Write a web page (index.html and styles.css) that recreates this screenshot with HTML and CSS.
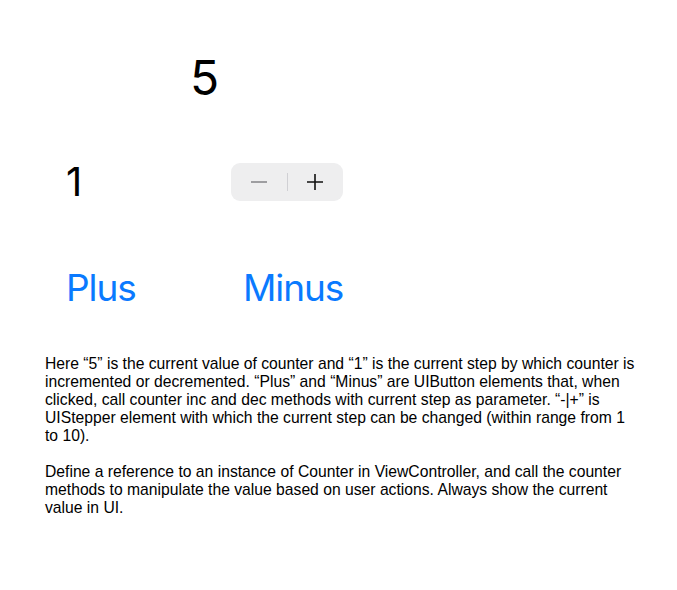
FILE: index.html
```html
<!DOCTYPE html>
<html>
<head>
<meta charset="utf-8">
<link rel="stylesheet" href="styles.css">
</head>
<body>
<div class="screen">
  <div class="value-row"><span class="value">5</span></div>
  <div class="step-row">
    <span class="step">1</span>
    <div class="stepper">
      <span class="stepper-btn"><svg width="18" height="18" viewBox="0 0 18 18"><path d="M1 9H17" stroke="#8a8a8e" stroke-width="1.6"/></svg></span>
      <span class="stepper-sep"></span>
      <span class="stepper-btn"><svg width="18" height="18" viewBox="0 0 18 18"><path d="M1 9H17M9 1V17" stroke="#111" stroke-width="1.6"/></svg></span>
    </div>
  </div>
  <div class="button-row">
    <span class="btn btn-plus">Plus</span>
    <span class="btn btn-minus">Minus</span>
  </div>
  <div class="desc">
    <p>Here “5” is the current value of counter and “1” is the current step by which counter is incremented or decremented. “Plus” and “Minus” are UIButton elements that, when clicked, call counter inc and dec methods with current step as parameter. “-|+” is UIStepper element with which the current step can be changed (within range from 1 to 10).</p>
    <p>Define a reference to an instance of Counter in ViewController, and call the counter methods to manipulate the value based on user actions. Always show the current value in UI.</p>
  </div>
</div>
</body>
</html>
```
FILE: styles.css
```css
html, body { margin: 0; padding: 0; background: #fff; }
.screen { width: 677px; height: 590px; font-family: Inter, "Noto Sans", sans-serif; color: #000; }
.value-row { padding: 48px 0 0 190px; height: 60px; }
.value { font-size: 48px; line-height: 60px; font-weight: 400; }
.step-row { display: flex; align-items: center; margin-top: 55px; padding-left: 66px; height: 38px; }
.step { font-size: 40px; line-height: 38px; width: 165px; }
.stepper { display: flex; align-items: center; width: 112px; height: 38px; background: #eeeeef; border-radius: 9px; }
.stepper-btn { flex: 1; display: flex; justify-content: center; align-items: center; height: 100%; }
.stepper-sep { width: 1px; height: 18px; background: #d0d0d4; }
.button-row { display: flex; margin-top: 62px; padding-left: 66px; height: 50px; align-items: center; }
.btn { color: #0a7aff; font-size: 37px; line-height: 50px; letter-spacing: -1.1px; }
.btn-plus { width: 177px; }
.desc { width: 592px; padding: 0 0 0 45px; margin-top: 42px; font-family: "Liberation Sans", Arial, sans-serif; font-size: 15.7px; line-height: 18px; }
.desc p { margin: 0 0 18px; }
```
